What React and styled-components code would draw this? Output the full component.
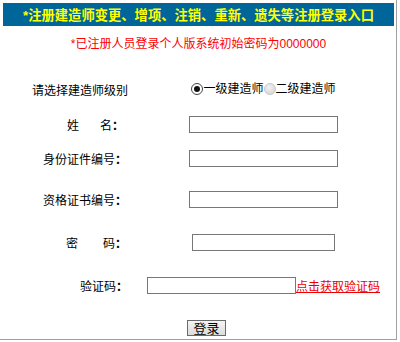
import React from 'react';
import styled, { createGlobalStyle } from 'styled-components';

const GlobalStyle = createGlobalStyle`
	html, body {
		margin: 0;
		padding: 0;
		background: #fff;
	}
	body {
		font-family: 'Liberation Sans', 'Noto Sans CJK SC', sans-serif;
		font-size: 12px;
		color: #000;
	}
`;

const Panel = styled.div`
	box-sizing: border-box;
	width: 397px;
	height: 340px;
	padding: 3px 2px 0 3px;
	border-right: 1px solid #a0a0a0;
	border-bottom: 1px solid #a0a0a0;
	display: flex;
	flex-direction: column;
`;

const Header = styled.div`
	height: 23px;
	background: #006699;
	color: #ffff00;
	font-weight: 700;
	font-size: 13.3px;
	display: flex;
	align-items: center;
	justify-content: center;
`;

const Notice = styled.div`
	margin-top: 12px;
	line-height: 12px;
	height: 12px;
	text-align: center;
	color: #ff0000;
	font-size: 12px;
`;

const Form = styled.div`
	margin-top: 21px;
	display: grid;
	grid-template-columns: 130px 1fr;
`;

const Label = styled.div`
	height: ${(p) => p.$h}px;
	display: flex;
	align-items: center;
	justify-content: flex-end;
	padding-right: ${(p) => p.$pr ?? 6}px;
	white-space: nowrap;
`;

const Colon = styled.span`
	font-weight: 700;
`;

const Field = styled.div`
	height: ${(p) => p.$h}px;
	display: flex;
	align-items: center;
	justify-content: center;
`;

const Spacer = styled.span`
	display: inline-block;
	width: ${(p) => p.$w}px;
`;

const TextInput = styled.input`
	box-sizing: border-box;
	width: ${(p) => p.$w}px;
	height: 17px;
	border: 1px solid #777;
	padding: 0 2px;
	margin: 0;
	font-size: 12px;
	background: #fff;
	outline: none;
`;

const RadioGroup = styled.div`
	display: flex;
	align-items: center;
`;

const Radio = styled.input.attrs({ type: 'radio' })`
	appearance: none;
	margin: 0;
	width: 12px;
	height: 12px;
	border-radius: 50%;
	box-sizing: border-box;
	border: 1px solid #c8c8c8;
	background: radial-gradient(circle at 40% 35%, #f2f2f2, #d0d0d0);
	position: relative;

	&:checked {
		border: 1px solid #444;
		background: #fff;
	}
	&:checked::after {
		content: '';
		position: absolute;
		left: 2px;
		top: 2px;
		width: 6px;
		height: 6px;
		border-radius: 50%;
		background: #111;
	}
`;

const RadioText = styled.span`
	line-height: 12px;
`;

const CodeLink = styled.a`
	color: #ee0000;
	text-decoration: underline;
	white-space: nowrap;
	cursor: pointer;
`;

const ButtonRow = styled.div`
	display: flex;
	justify-content: center;
	padding-top: 11px;
	padding-left: 16px;
`;

const SubmitButton = styled.button`
	height: 16px;
	padding: 0 5px;
	font-family: 'Noto Sans CJK SC', sans-serif;
	font-size: 13px;
	line-height: 14px;
	background: linear-gradient(#f4f4f4, #dcdcdc);
	border: 1px solid #6a6a6a;
	color: #000;
	display: flex;
	align-items: center;
`;

const App = () => (
	<>
		<GlobalStyle />
		<Panel>
			<Header>*注册建造师变更、增项、注销、重新、遗失等注册登录入口</Header>
			<Notice>*已注册人员登录个人版系统初始密码为0000000</Notice>
			<Form>
				<Label $h={36} $pr={5}>请选择建造师级别</Label>
				<Field $h={36}>
					<RadioGroup>
						<Radio name="level" defaultChecked />
						<RadioText>一级建造师</RadioText>
						<Radio name="level" />
						<RadioText>二级建造师</RadioText>
					</RadioGroup>
				</Field>

				<Label $h={34} $pr={9}>
					姓<Spacer $w={21} />名<Colon>：</Colon>
				</Label>
				<Field $h={34}>
					<TextInput $w={149} />
				</Field>

				<Label $h={34}>身份证件编号<Colon>：</Colon></Label>
				<Field $h={34}>
					<TextInput $w={149} />
				</Field>

				<Label $h={48}>资格证书编号<Colon>：</Colon></Label>
				<Field $h={48}>
					<TextInput $w={149} />
				</Field>

				<Label $h={38}>
					密<Spacer $w={25} />码<Colon>：</Colon>
				</Label>
				<Field $h={38}>
					<TextInput type="password" $w={143} />
				</Field>

				<Label $h={48} $pr={5}>验证码<Colon>：</Colon></Label>
				<Field $h={48}>
					<TextInput $w={149} />
					<CodeLink>点击获取验证码</CodeLink>
				</Field>
			</Form>
			<ButtonRow>
				<SubmitButton>登录</SubmitButton>
			</ButtonRow>
		</Panel>
	</>
);

export default App;
